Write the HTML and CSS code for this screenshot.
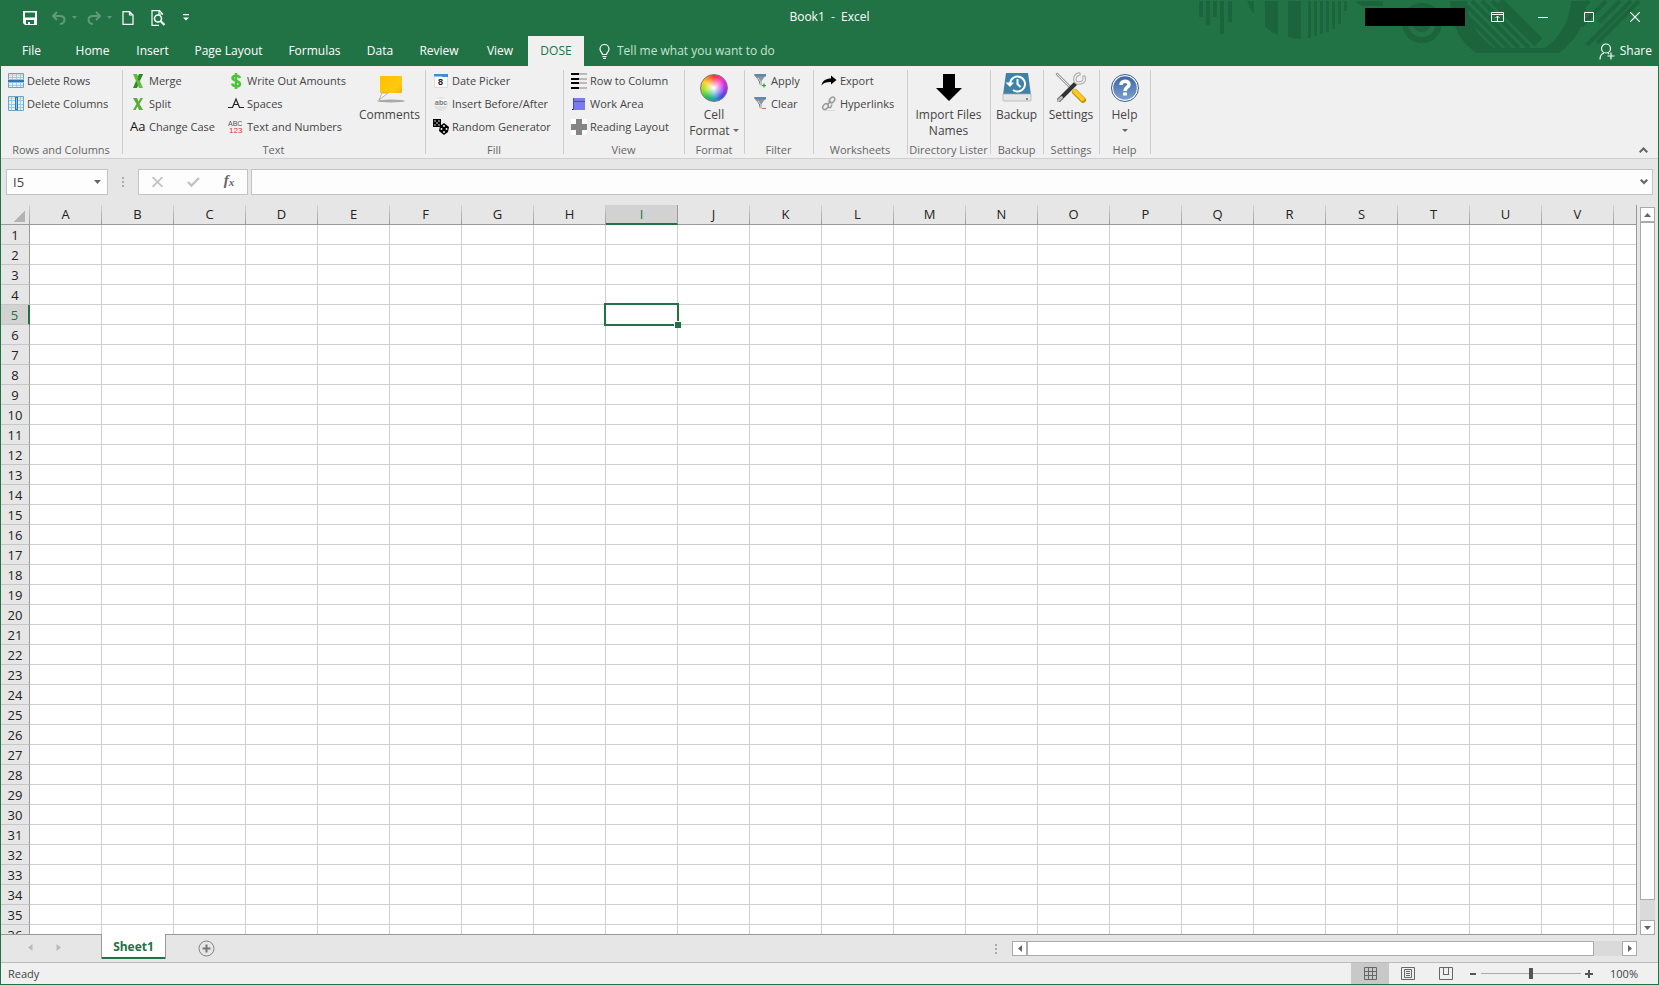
FILE: index.html
```html
<!DOCTYPE html>
<html lang="en">
<head>
<meta charset="utf-8">
<title>Book1 - Excel</title>
<link rel="stylesheet" href="styles.css">
</head>
<body>
<div class="window">
  <header class="top">
    <svg class="art" viewBox="0 0 459 56" width="459" height="56" aria-hidden="true">
      <g fill="#1c643c">
        <path d="M0 1h4v16h-4zM7 1h4v24h-4zM14 1h4v16h-4zM21 1h4v33h-4zM29 1h4v21h-4z"/>
        <path d="M48 1h7v13q-5-6-7-13zM66 1h13v34q-8-3-13-9zM89 1h13v38q-7 0-13-2zM109 1h3v37h-3zM115 1h3v35h-3zM121 1h3v33h-3zM127 1h3v31h-3zM133 1h3v28h-3zM139 1h3v23h-3zM145 1h3v10h-3z"/>
        <path d="M157 1h27v5h-19q-5 0-8-5z"/>
        <path d="M251 1h17q0 27 27 47h51q24-17 26-47h15q0 32-27 52H278Q253 38 251 1z"/>
      </g>
      <g fill="none" stroke="#1c643c">
        <circle cx="223" cy="23" r="17" stroke-width="6"/>
        <circle cx="223" cy="23" r="6" stroke-width="6"/>
        <path stroke-width="4" d="M266 14l35 35M268 6l43 43M273 1l47 47M283 1l47 47M293 1l44 44"/>
        <path stroke-width="7" d="M301 1l40 40"/>
        <path stroke-width="4" d="M388 45l44-44M398 43l42-42M382 26l25-25M384 7l6-6M400 22l21-21"/>
      </g>
    </svg>
    <div class="titlebar">
      <div class="quick">
        <button class="qbtn save" aria-label="Save"><svg width="14" height="14" viewBox="0 0 14 14"><path fill="#fff" fill-rule="evenodd" d="M0 0h14v14H2L0 12zM2 1.500v5h10v-5zM3 9v4h2v-2h2v2h4V9z"/></svg></button>
        <button class="qbtn undo faded" aria-label="Undo"><svg width="14" height="14" viewBox="0 0 14 14" fill="none" stroke="#fff" stroke-width="2"><path d="M5 1L1 5l4 4M1 5h7c6 0 6 7 0 8"/></svg></button>
        <button class="qbtn caret faded" aria-label="Undo list"><svg width="5" height="3" viewBox="0 0 5 3"><path fill="#fff" d="M0 0h5L2.500 3z"/></svg></button>
        <button class="qbtn redo faded" aria-label="Redo"><svg width="14" height="14" viewBox="0 0 14 14" fill="none" stroke="#fff" stroke-width="2"><path d="M9 1l4 4-4 4M13 5H6c-6 0-6 7 0 8"/></svg></button>
        <button class="qbtn caret faded" aria-label="Redo list"><svg width="5" height="3" viewBox="0 0 5 3"><path fill="#fff" d="M0 0h5L2.500 3z"/></svg></button>
        <button class="qbtn page" aria-label="New"><svg width="12" height="14" viewBox="0 0 12 14" fill="none" stroke="#fff" stroke-width="1.200"><path d="M1 .6h6.500L11 4v9.400H1zM7.500.6V4H11"/></svg></button>
        <button class="qbtn preview" aria-label="Print preview"><svg width="15" height="16" viewBox="0 0 15 16" fill="none" stroke="#fff" stroke-width="1.200"><path d="M12 4.500L8.500.6H1v14.800h7M8 .6V4h4"/><circle cx="7" cy="8.500" r="3.500" stroke-width="1.600"/><path d="M9.500 11l4 4" stroke-width="2.200"/></svg></button>
        <button class="qbtn more" aria-label="Customize toolbar"><svg width="6" height="7" viewBox="0 0 6 7"><path fill="#fff" d="M0 0h6v1.200H0zM0 3.500h6L3 6.500z"/></svg></button>
      </div>
      <h1 class="title">Book1 &nbsp;- &nbsp;Excel</h1>
      <div class="controls">
        <span class="account"></span>
        <button class="wbtn" aria-label="Ribbon display options"><svg width="13" height="10" viewBox="0 0 13 10" fill="none" stroke="#fff"><path d="M.5.500h12v9H.500zM.5 2.500h12M6.500 9V4M4.500 6l2-2 2 2"/></svg></button>
        <button class="wbtn" aria-label="Minimize"><svg width="10" height="10" viewBox="0 0 10 10"><path stroke="#fff" d="M0 5.500h10"/></svg></button>
        <button class="wbtn" aria-label="Maximize"><svg width="10" height="10" viewBox="0 0 10 10"><path fill="none" stroke="#fff" d="M.5.500h9v9h-9z"/></svg></button>
        <button class="wbtn" aria-label="Close"><svg width="10" height="10" viewBox="0 0 10 10"><path stroke="#fff" stroke-width="1.200" d="M0 0l10 10M10 0L0 10"/></svg></button>
      </div>
    </div>
    <nav class="tabs">
      <button class="tab w61">File</button>
      <button class="tab w61">Home</button>
      <button class="tab w59">Insert</button>
      <button class="tab w93">Page Layout</button>
      <button class="tab w79">Formulas</button>
      <button class="tab w52">Data</button>
      <button class="tab w66">Review</button>
      <button class="tab w56">View</button>
      <button class="tab w56 active">DOSE</button>
      <label class="tell">
        <svg width="11" height="15" viewBox="0 0 11 15" fill="none" stroke="#fff" stroke-width="1.200"><path d="M3.500 10.500C3.500 8.500 1 8 1 5a4.500 4.500 0 0 1 9 0c0 3-2.500 3.500-2.500 5.500zM3.500 12.500h4M4 14.300h3"/></svg>
        <input type="text" placeholder="Tell me what you want to do" aria-label="Tell me what you want to do">
      </label>
      <button class="share"><svg width="16" height="17" viewBox="0 0 16 17" fill="none" stroke="#fff" stroke-width="1.200"><circle cx="7" cy="5.500" r="4.500"/><path d="M1 16.500c0-3.500 1-5.500 4-6.500M9 10l1 1M8.500 13h7M12 9.500v7"/></svg>Share</button>
    </nav>
  </header>

  <section class="ribbon">
    <div class="group g-rows">
      <div class="stack">
        <button class="cmd"><svg width="16" height="16" viewBox="0 0 16 16"><path fill="#e6f3fb" stroke="#6ba5cc" d="M.5.500h15v14H.500z"/><path fill="#e5dfb8" d="M1 1h14v2H1z"/><path stroke="#9ccae6" d="M4.500 1v13M8.500 1v13M12.500 1v13M1 4.500h14M1 12.500h14"/><path fill="#8cc3e8" d="M0 6h16v4H0z"/><path fill="#3476aa" d="M0 7h16v2H0z"/></svg>Delete Rows</button>
        <button class="cmd"><svg width="16" height="16" viewBox="0 0 16 16"><path fill="#e6f3fb" stroke="#6ba5cc" d="M.5.500h15v14H.500z"/><path fill="#e5dfb8" d="M1 1h14v2H1z"/><path stroke="#9ccae6" d="M3.500 1v13M12.500 1v13M1 4.500h14M1 8.500h14M1 11.500h14"/><path fill="#3476aa" d="M7 1h3v13H7z"/><path fill="#8cc3e8" d="M8 2h1v11H8z"/></svg>Delete Columns</button>
      </div>
      <h2>Rows and Columns</h2>
    </div>
    <div class="group g-text">
      <div class="textgrid">
        <div class="stack">
          <button class="cmd"><svg width="16" height="16" viewBox="0 0 16 16"><path fill="#2f8b2c" d="M9 1h4L7 15H3z"/><path fill="#62bd3c" d="M3 1h4l6 14H9z"/><path fill="#2f8b2c" d="M10 1h3L9 8 7.500 6z"/></svg>Merge</button>
          <button class="cmd"><svg width="16" height="16" viewBox="0 0 16 16"><path fill="#58ad36" d="M3 2h4l1.500 3.500L10.500 2H13L9.500 8l3.500 6H9L7.500 10.500 5.500 14H3l3.500-6z"/></svg>Split</button>
          <button class="cmd"><svg class="spill" width="16" height="16" viewBox="0 0 16 16"><text class="ico-aa" x="0" y="12">Aa</text></svg>Change Case</button>
        </div>
        <div class="stack">
          <button class="cmd"><svg width="16" height="16" viewBox="0 0 16 16"><path fill="none" stroke="#4cc33c" stroke-width="2.600" d="M12 5C11 2 4.500 2 4.500 5S12 7.500 12 11s-7 3-8-.5M8 0v16"/></svg>Write Out Amounts</button>
          <button class="cmd"><svg width="16" height="16" viewBox="0 0 16 16"><path fill="none" stroke="#222" stroke-width="1.200" d="M0 11.500h5M11 11.500h5M4.500 11.500L8 3l3.500 8.500M5.500 8.500h5"/></svg>Spaces</button>
          <button class="cmd"><svg class="spill" width="16" height="16" viewBox="0 0 16 16"><text class="ico-abc" x="0" y="7">ABC</text><text class="ico-123" x="1" y="14">123</text></svg>Text and Numbers</button>
        </div>
        <button class="big"><svg width="32" height="32" viewBox="0 0 32 32"><defs><linearGradient id="note" x1="0" y1="0" x2="1" y2="1"><stop offset="0" stop-color="#ffbe00"/><stop offset=".6" stop-color="#ffc90f"/><stop offset="1" stop-color="#e8a90a"/></linearGradient></defs><ellipse cx="17" cy="29" rx="14" ry="1.500" fill="#a9a9a9"/><path fill="url(#note)" d="M6 4h22v17H14l-9 7 3-7H6z"/><path fill="#fff" stroke="#999" stroke-width=".7" d="M8 21h6l-9 7z"/></svg><span>Comments</span></button>
      </div>
      <h2>Text</h2>
    </div>
    <div class="group g-fill">
      <div class="stack">
        <button class="cmd"><svg width="16" height="16" viewBox="0 0 16 16"><path fill="#fafafa" stroke="#ddd" d="M1.500 3.500h13v11h-13z"/><path fill="#3f8fd0" d="M1 1h14v3H1z"/><path fill="#9ac8ea" d="M1 3h8v1H1z"/><text class="ico-day" x="5" y="12">8</text></svg>Date Picker</button>
        <button class="cmd"><svg width="16" height="16" viewBox="0 0 16 16"><circle cx="8" cy="8" r="7" fill="#e2e2e2"/><path fill="#f7f7f7" d="M2 3h12v7H2z"/><text class="ico-low" x="2" y="9">abc</text></svg>Insert Before/After</button>
        <button class="cmd"><svg width="16" height="16" viewBox="0 0 16 16"><path d="M0 0h8v8H0z"/><path d="M11 4l5 4-1 5-4 3-5-4 1-5z"/><g fill="#f0f0f0"><circle cx="2" cy="2" r=".8"/><circle cx="6" cy="2" r=".8"/><circle cx="4" cy="4" r=".8"/><circle cx="2" cy="6" r=".8"/><circle cx="6" cy="6" r=".8"/><circle cx="11" cy="7" r="1"/><circle cx="8.500" cy="10" r="1"/><circle cx="13.500" cy="10" r="1"/><circle cx="11" cy="13" r="1"/></g></svg>Random Generator</button>
      </div>
      <h2>Fill</h2>
    </div>
    <div class="group g-view">
      <div class="stack">
        <button class="cmd"><svg width="16" height="16" viewBox="0 0 16 16"><path d="M0 0h8v2H0zM0 5h8v2H0zM0 9h8v2H0zM0 14h8v2H0z"/><path fill="#bbb" d="M8 0h8v2H8zM8 5h8v2H8zM8 9h8v2H8zM8 14h8v2H8z"/></svg>Row to Column</button>
        <button class="cmd"><svg width="16" height="16" viewBox="0 0 16 16"><path fill="#7b7bec" d="M2 2h12v12H2z"/><path stroke="#4a4aba" d="M2 5.500h12M2.500 2v12"/><path d="M1 13h1v1H1z"/></svg>Work Area</button>
        <button class="cmd"><svg width="16" height="16" viewBox="0 0 16 16"><path fill="#fff" d="M0 0h16v16H0z"/><path fill="#858585" d="M5 0h6v5h5v6h-5v5H5v-5H0V5h5z"/></svg>Reading Layout</button>
      </div>
      <h2>View</h2>
    </div>
    <div class="group g-format">
      <button class="big"><span class="wheel"></span><span>Cell<br>Format <i class="down"></i></span></button>
      <h2>Format</h2>
    </div>
    <div class="group g-filter">
      <div class="stack">
        <button class="cmd"><svg width="16" height="16" viewBox="0 0 16 16"><path fill="#8d969e" d="M2 2h12L9.500 8v5L7 11V8z"/><path fill="#5e88ad" d="M2 1h12v2.500H3.500z"/><path stroke="#e8edf0" d="M6 5l2 3v4"/><path stroke="#2c9a2c" stroke-width="1.200" d="M10 12.500h4M12 10.500v4"/></svg>Apply</button>
        <button class="cmd"><svg width="16" height="16" viewBox="0 0 16 16"><path fill="#8d969e" d="M2 2h12L9.500 8v5L7 11V8z"/><path fill="#5e88ad" d="M2 1h12v2.500H3.500z"/><path stroke="#e8edf0" d="M6 5l2 3v4"/><path stroke="#d9705e" stroke-width="1.200" d="M10 12.500h4"/></svg>Clear</button>
      </div>
      <h2>Filter</h2>
    </div>
    <div class="group g-sheets">
      <div class="stack">
        <button class="cmd"><svg width="16" height="16" viewBox="0 0 16 16"><path d="M10 2.500L15.500 7 10 11.500V9C5 9 2 10 .500 12.500 1 8 5 5.500 10 5.500z"/></svg>Export</button>
        <button class="cmd"><svg width="16" height="16" viewBox="0 0 16 16"><path stroke="#ddd" d="M2 14.500h12"/><g fill="none" stroke="#999" stroke-width="1.500"><ellipse cx="11" cy="4" rx="3.300" ry="2.200" transform="rotate(-50 11 4)"/><ellipse cx="4.500" cy="10.500" rx="3.300" ry="2.200" transform="rotate(-50 4.500 10.500)"/><path d="M6 9l4-4M7 11.500h2.500l1.500-3"/></g></svg>Hyperlinks</button>
      </div>
      <h2>Worksheets</h2>
    </div>
    <div class="group g-dir">
      <button class="big"><svg width="32" height="32" viewBox="0 0 32 32"><path d="M10 2h12v14h7L16 29 3 16h7z"/></svg><span>Import Files<br>Names</span></button>
      <h2>Directory Lister</h2>
    </div>
    <div class="group g-backup">
      <button class="big"><svg width="32" height="32" viewBox="0 0 32 32"><path fill="#3f82a8" d="M5 1h22l3 22H2z"/><path fill="#e6e6e6" stroke="#aaa" stroke-width=".7" d="M2 22h28v6q0 1-1 1H3q-1 0-1-1z"/><circle cx="26" cy="27" r="1" fill="#666"/><g fill="none" stroke="#fff" stroke-width="2"><path d="M9 12a7.500 7.500 0 1 1 3 6M16.500 7v5l3 3"/></g><path fill="#fff" d="M4.500 10.500h8.500L9 15z"/></svg><span>Backup</span></button>
      <h2>Backup</h2>
    </div>
    <div class="group g-settings">
      <button class="big"><svg width="32" height="32" viewBox="0 0 32 32" fill="none" stroke-linecap="round"><path stroke="#999" stroke-width="2.500" d="M2 2l14 14"/><path stroke="#f2f2f2" d="M2 2l13 13"/><path stroke="#333" stroke-width="4" d="M4 28L20 12"/><path stroke="#bbb" stroke-width="3" d="M3.500 28.500l3-3"/><path stroke="#aaa" stroke-width="3.500" d="M24 2c-6 2-5 10 0 9 4 0 6-2 5-6"/><path stroke="#eee" stroke-width="1.500" d="M24 2c-6 2-5 10 0 9 4 0 6-2 5-6"/><path stroke="#c49109" stroke-width="6" d="M20 20l8 8"/><path stroke="#fbc91f" stroke-width="4" d="M19.500 19l8 8"/></svg><span>Settings</span></button>
      <h2>Settings</h2>
    </div>
    <div class="group g-help">
      <button class="big"><svg width="32" height="32" viewBox="0 0 32 32"><defs><linearGradient id="ball" x1="0" y1="0" x2="0" y2="1"><stop offset="0" stop-color="#3d66a5"/><stop offset="1" stop-color="#7b9fd0"/></linearGradient></defs><circle cx="16" cy="16" r="13.500" fill="#fff" stroke="#335a94"/><circle cx="16" cy="16" r="11.800" fill="url(#ball)"/><path fill="none" stroke="#fff" stroke-width="3.500" d="M12 13c0-5 8-5 8-.5 0 3-4 2.500-4 6.500"/><path fill="#fff" d="M14 20.500h4v3h-4z"/></svg><span>Help<br><i class="down"></i></span></button>
      <h2>Help</h2>
    </div>
    <button class="collapse" aria-label="Collapse the ribbon"><svg width="9" height="6" viewBox="0 0 9 6"><path fill="none" stroke="#666" stroke-width="2" d="M.7 5.300L4.500 1.500l3.800 3.800"/></svg></button>
  </section>

  <section class="formula">
    <div class="namebox"><input type="text" value="I5" aria-label="Name box"><button aria-label="Names"><svg width="7" height="4" viewBox="0 0 7 4"><path fill="#666" d="M0 0h7L3.500 4z"/></svg></button></div>
    <span class="dots"></span>
    <div class="fx">
      <button aria-label="Cancel"><svg width="11" height="10" viewBox="0 0 11 10"><path stroke="#c2c2c2" stroke-width="1.800" d="M.5 0l10 10M10.500 0l-10 10"/></svg></button>
      <button aria-label="Enter"><svg width="13" height="10" viewBox="0 0 13 10"><path fill="none" stroke="#c2c2c2" stroke-width="2.400" d="M1 5l3.500 3.500L12 1"/></svg></button>
      <button class="fn" aria-label="Insert function">f<small>x</small></button>
    </div>
    <div class="entry"><input type="text" aria-label="Formula bar"><button aria-label="Expand formula bar"><svg width="8" height="6" viewBox="0 0 8 6"><path fill="none" stroke="#666" stroke-width="2.200" d="M.7.700L4 4l3.300-3.300"/></svg></button></div>
  </section>

  <main class="work">
    <div class="pane"><table class="sheet" id="sheet"></table></div>
    <div class="vscroll">
      <button class="sbtn" aria-label="Scroll up"><svg width="7" height="4" viewBox="0 0 7 4"><path fill="#666" d="M0 4h7L3.500 0z"/></svg></button>
      <div class="vthumb"></div>
      <div class="vtrack"></div>
      <button class="sbtn" aria-label="Scroll down"><svg width="7" height="4" viewBox="0 0 7 4"><path fill="#666" d="M0 0h7L3.500 4z"/></svg></button>
    </div>
  </main>

  <div class="sheetbar">
    <div class="sheetnav">
      <button aria-label="Previous sheet"><svg width="5" height="7" viewBox="0 0 5 7"><path fill="#bbb" d="M4.500 0v7L0 3.500z"/></svg></button>
      <button aria-label="Next sheet"><svg width="5" height="7" viewBox="0 0 5 7"><path fill="#bbb" d="M.5 0v7L5 3.500z"/></svg></button>
    </div>
    <button class="sheettab">Sheet1</button>
    <button class="add" aria-label="New sheet"><svg width="17" height="17" viewBox="0 0 17 17" fill="none" stroke="#808080"><circle cx="8.500" cy="8.500" r="7.500"/><path stroke="#777" stroke-width="2" d="M4.500 8.500h8M8.500 4.500v8"/></svg></button>
    <span class="dots"></span>
    <div class="hscroll">
      <button class="sbtn" aria-label="Scroll left"><svg width="4" height="7" viewBox="0 0 4 7"><path fill="#666" d="M4 0v7L0 3.500z"/></svg></button>
      <div class="hthumb"></div>
      <div class="htrack"></div>
      <button class="sbtn" aria-label="Scroll right"><svg width="4" height="7" viewBox="0 0 4 7"><path fill="#666" d="M0 0v7l4-3.500z"/></svg></button>
    </div>
  </div>

  <footer class="status">
    <span class="ready">Ready</span>
    <div class="views">
      <button class="on" aria-label="Normal view"><svg width="13" height="13" viewBox="0 0 13 13" fill="none" stroke="#666"><path d="M.5.500h12v12H.500zM4.500 0v13M8.500 0v13M0 4.500h13M0 8.500h13"/></svg></button>
      <button aria-label="Page layout view"><svg width="14" height="13" viewBox="0 0 14 13" fill="none" stroke="#666"><path d="M.5.500h13v12H.500zM3.500 2.500h7v8h-7zM5 4.500h4M5 6.500h4M5 8.500h4"/></svg></button>
      <button aria-label="Page break view"><svg width="14" height="13" viewBox="0 0 14 13" fill="none" stroke="#666"><path d="M.5.500h13v12H.500zM4.500 0v7M9.500 0v7M4 7.500h6"/></svg></button>
    </div>
    <button class="zbtn" aria-label="Zoom out"><svg width="8" height="8" viewBox="0 0 8 8"><path fill="#555" d="M1 3h6v2H1z"/></svg></button>
    <input class="zoom" type="range" min="10" max="190" value="100" aria-label="Zoom">
    <button class="zbtn" aria-label="Zoom in"><svg width="8" height="8" viewBox="0 0 8 8"><path fill="#555" d="M0 3h3V0h2v3h3v2H5v3H3V5H0z"/></svg></button>
    <button class="pct">100%</button>
  </footer>
</div>
<script src="script.js"></script>
</body>
</html>
```
FILE: styles.css
```css
* { box-sizing: border-box; }
html, body { margin: 0; height: 100%; }
body { font: 12px/16px "Open Sans", "Noto Sans", sans-serif; color: #444; overflow: hidden; }
button, input { font: inherit; color: inherit; background: none; border: 0; padding: 0; margin: 0; outline: 0; }
svg { display: block; flex: none; }

.window { height: 100vh; display: flex; flex-direction: column; background: #e6e6e6; border: solid #217346; border-width: 0 1px 1px; }

/* Title bar and tabs */
.top { position: relative; background: #217346; color: #fff; flex: none; }
.art { position: absolute; top: 0; right: 0; }
.titlebar { position: relative; height: 36px; display: grid; grid-template-columns: 1fr auto 1fr; align-items: center; padding-bottom: 3px; }
.quick { display: flex; align-items: center; padding: 2px 0 0 22px; }
.qbtn { display: flex; }
.faded { opacity: .28; }
.undo, .redo { margin-left: 15px; }
.caret { margin-left: 6px; }
.redo { margin-left: 10px; }
.page { margin-left: 10px; }
.preview { margin-left: 17px; }
.more { margin-left: 17px; }
.title { margin: 0; font-size: 12px; font-weight: 400; }
.controls { display: flex; justify-content: flex-end; align-items: center; }
.account { width: 100px; height: 18px; background: #000; margin-right: 9px; }
.wbtn { width: 46px; height: 30px; display: flex; align-items: center; justify-content: center; }
.tabs { position: relative; height: 30px; display: flex; }
.tab { text-align: center; white-space: nowrap; }
.w52 { width: 52px; }
.w56 { width: 56px; }
.w59 { width: 59px; }
.w61 { width: 61px; }
.w66 { width: 66px; }
.w79 { width: 79px; }
.w93 { width: 93px; }
.active { background: #f0f0f0; color: #217346; }
.tell { display: flex; align-items: center; gap: 7px; margin-left: 15px; }
.tell input { width: 200px; }
.tell input::placeholder { color: #c4e3d0; opacity: 1; }
.share { margin-left: auto; padding-right: 6px; display: flex; align-items: center; gap: 5px; }

/* Ribbon */
.ribbon { height: 93px; flex: none; display: flex; background: #f0f0f0; border-bottom: 1px solid #d0d0d0; }
.group { display: flex; flex-direction: column; padding: 3px 2px 0 0; background: linear-gradient(#cdcdcd, #cdcdcd) right 4px / 1px 84px no-repeat; }
.group h2 { margin: auto 0 0; font-size: 11px; font-weight: 400; color: #666; text-align: center; white-space: nowrap; }
.g-rows { width: 122px; }
.g-text { width: 303px; }
.g-fill { width: 138px; }
.g-view { width: 121px; }
.g-format { width: 60px; }
.g-filter { width: 69px; }
.g-sheets { width: 94px; }
.g-dir { width: 83px; }
.g-backup { width: 53px; }
.g-settings { width: 56px; }
.g-help { width: 51px; }
.stack { padding-left: 7px; display: flex; flex-direction: column; align-items: flex-start; }
.textgrid { display: grid; grid-template-columns: 98px 134px 1fr; }
.cmd { height: 23px; display: flex; align-items: center; gap: 3px; white-space: nowrap; font-size: 11px; }
.big { display: flex; flex-direction: column; align-items: center; padding-top: 3px; white-space: nowrap; align-self: stretch; }
.big span { margin-top: 3px; }
.big .wheel { width: 28px; height: 28px; margin: 2px 0; border-radius: 50%; background: radial-gradient(circle, #fff 0, rgba(255,255,255,0) 60%), conic-gradient(#f33, #ff2fd0 12%, #b02cf0 25%, #4a48e8 38%, #2196c8 48%, #22c055 60%, #9be01c 72%, #ffd21c 84%, #f33); border: 1px solid #777; }
.down { display: inline-block; border: solid transparent; border-width: 3px 3px 0; border-top-color: #666; vertical-align: 3px; }
.collapse { margin-left: auto; align-self: flex-end; padding: 0 10px 5px; }
.spill { overflow: visible; }
.ico-aa { font: 13px "Open Sans", sans-serif; fill: #111; }
.ico-abc { font: 7px "Liberation Sans", sans-serif; fill: #555; }
.ico-123 { font: 8px "Liberation Sans", sans-serif; fill: #e03030; }
.ico-day { font: bold 9px "Liberation Sans", sans-serif; fill: #222; }
.ico-low { font: bold 7px "Liberation Sans", sans-serif; fill: #777; }

/* Formula bar */
.formula { flex: none; display: flex; height: 46px; padding: 10px 5px; }
.formula > div { border: 1px solid #c3c3c3; background: #fdfdfd; display: flex; align-items: center; }
.namebox { width: 102px; padding: 0 6px; }
.namebox input { width: 82px; flex: 1; min-width: 0; font-size: 13px; }
.dots { width: 2px; height: 10px; align-self: center; background: repeating-linear-gradient(#aaa 0 2px, transparent 2px 4px); }
.formula .dots { margin: 0 14px; }
.fx { width: 110px; justify-content: space-around; }
.fx button { width: 36px; display: flex; justify-content: center; }
.fx .fn { font: italic bold 15px/16px "Liberation Serif", serif; color: #666; }
.fn small { font-size: 11px; line-height: 20px; }
.entry { flex: 1; margin-left: 3px; padding-right: 4px; }
.entry input { flex: 1; padding-left: 6px; }

/* Grid */
.work { flex: 1; min-height: 0; display: flex; }
.pane { flex: 1; min-width: 0; overflow: hidden; border: solid #999; border-width: 0 1px 1px 0; }
.sheet { width: 100%; table-layout: fixed; border-spacing: 0; background: #fff; color: #222; }
.sheet th { padding: 0; height: 20px; font-size: 13px; line-height: 18px; font-weight: 400; background: #e6e6e6; }
.sheet thead th { width: 72px; padding-bottom: 1px; line-height: 16px; border-bottom: 1px solid #999; border-right: 1px solid; border-image: linear-gradient(#d5d5d5, #999) 1; }
.sheet thead .corner { width: 29px; }
.sheet thead .rest { width: auto; border-right: 0; }
.corner div { width: 12px; height: 12px; margin: 4px 0 0 12px; background: linear-gradient(135deg, transparent 50%, #b4b4b4 50%); }
.sheet tbody th { border-right: 1px solid #999; border-bottom: 1px solid #c6c6c6; }
.sheet td { padding: 0; height: 20px; border-right: 1px solid #d0d0d0; border-bottom: 1px solid #d0d0d0; }
.sheet td:last-child { border-right: 0; }
.sheet thead .sel { padding-bottom: 0; background: #d2d2d2; color: #217346; border-image: none; border-right-color: #999; border-bottom: 2px solid #217346; }
.sheet tbody .sel { background: #d2d2d2; color: #217346; border-right: 2px solid #217346; }
.cursor { position: relative; }
.cursor::before { content: ""; position: absolute; inset: -2px; border: 2px solid #217346; }
.cursor::after { content: ""; position: absolute; right: -4px; bottom: -4px; width: 6px; height: 6px; background: #217346; border: solid #fff; border-width: 1px 0 0 1px; }
.vscroll { width: 21px; padding: 2px 3px 0; display: flex; flex-direction: column; }
.sbtn { width: 15px; height: 15px; flex: none; background: #fff; border: 1px solid #aaa; display: flex; align-items: center; justify-content: center; }
.vthumb { flex: 1; background: #fff; border: 1px solid #aaa; }
.vtrack { height: 20px; background: #dadada; }

/* Sheet tabs */
.sheetbar { height: 28px; flex: none; display: flex; border-bottom: 1px solid #bbb; padding-right: 21px; }
.sheetnav { width: 100px; display: flex; gap: 23px; align-items: center; padding: 0 0 2px 27px; }
.sheettab { position: relative; width: 65px; height: 25px; margin-top: -1px; background: #fff; border: solid #999; border-width: 0 1px; box-shadow: inset 0 -2px #217346; color: #217346; font-weight: 700; font-size: 12px; }
.add { margin-left: 32px; padding-bottom: 1px; }
.sheetbar .dots { margin-left: auto; margin-right: 15px; }
.hscroll { flex: 0 1 625px; display: flex; align-items: center; }
.hthumb { flex: 1; height: 15px; background: #fff; border: 1px solid #aaa; }
.htrack { width: 28px; height: 15px; background: #dadada; }

/* Status bar */
.status { height: 21px; flex: none; display: flex; align-items: center; background: #f0f0f0; font-size: 11px; }
.ready { padding-left: 7px; }
.views { display: flex; margin-left: auto; align-self: stretch; }
.views button { width: 38px; display: flex; align-items: center; justify-content: center; }
.views .on { background: #c8c8c8; }
.zbtn { padding: 0 4px; }
.zoom { appearance: none; width: 100px; height: 12px; background: linear-gradient(#aaa, #aaa) center / 100% 1px no-repeat; }
.zoom::-webkit-slider-thumb { appearance: none; width: 4px; height: 11px; background: #555; border: 0; border-radius: 0; }
.pct { width: 61px; padding-right: 20px; text-align: right; }
```
FILE: script.js
```js
const letters = "ABCDEFGHIJKLMNOPQRSTUV".split("");
const selected = { col: "I", row: 5 };

let html = '<thead><tr><th class="corner"><div></div></th>';
for (const c of letters) {
  html += `<th${c === selected.col ? ' class="sel"' : ""}>${c}</th>`;
}
html += '<th class="rest"></th></tr></thead><tbody>';
for (let r = 1; r <= 36; r++) {
  html += `<tr><th${r === selected.row ? ' class="sel"' : ""}>${r}</th>`;
  for (const c of letters) {
    html += c === selected.col && r === selected.row ? '<td class="cursor"></td>' : "<td></td>";
  }
  html += "<td></td></tr>";
}
document.getElementById("sheet").innerHTML = html + "</tbody>";
```
